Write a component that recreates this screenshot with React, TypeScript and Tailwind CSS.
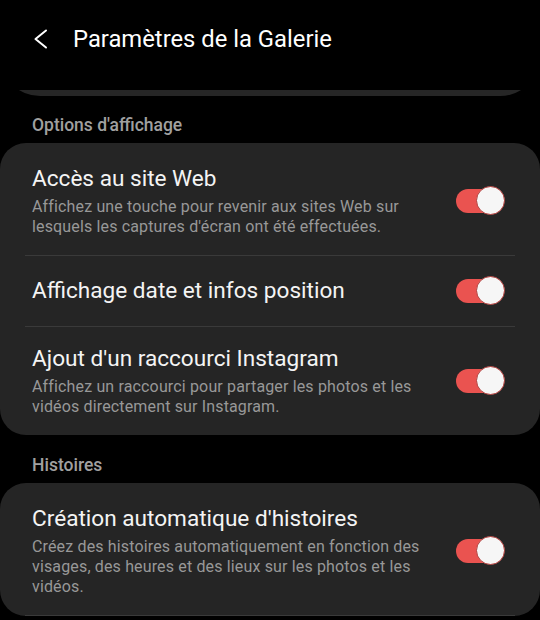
type Setting = {
  title: string;
  description?: string;
  on: boolean;
};

const display: Setting[] = [
  {
    title: 'Accès au site Web',
    description: "Affichez une touche pour revenir aux sites Web sur lesquels les captures d'écran ont été effectuées.",
    on: true,
  },
  { title: 'Affichage date et infos position', on: true },
  {
    title: "Ajout d'un raccourci Instagram",
    description: 'Affichez un raccourci pour partager les photos et les vidéos directement sur Instagram.',
    on: true,
  },
];

const stories: Setting[] = [
  {
    title: "Création automatique d'histoires",
    description: 'Créez des histoires automatiquement en fonction des visages, des heures et des lieux sur les photos et les vidéos.',
    on: true,
  },
];

function BackIcon() {
  return (
    <svg width="16" height="22" viewBox="0 0 16 22" fill="none" className="shrink-0">
      <polyline
        points="13,2.5 2.5,11 13,19.5"
        stroke="white"
        strokeWidth="2"
        strokeLinecap="round"
        strokeLinejoin="round"
      />
    </svg>
  );
}

function Toggle({ on }: { on: boolean }) {
  return (
    <div className="relative flex h-[30px] w-[50px] shrink-0 items-center">
      <div className={`h-[24px] w-[48px] rounded-full ${on ? 'bg-[#ea5350]' : 'bg-[#555]'}`} />
      <div
        className={`absolute top-0 h-[29px] w-[29px] rounded-full border border-[#b33d3a] bg-[#f6f6f6] ${
          on ? 'left-[20px]' : 'left-0'
        }`}
      />
    </div>
  );
}

function SettingRow({ item, last }: { item: Setting; last: boolean }) {
  return (
    <div
      className={`flex items-center gap-4 pl-[7px] pr-[9px] ${item.description ? 'py-[18px]' : 'py-5'} ${
        last ? '' : 'border-b border-[#3a3a3a]'
      }`}
    >
      <div className="min-w-0 flex-1 pr-[8px]">
        <p className="text-[22.6px] leading-[28px] text-[#f4f4f4]">{item.title}</p>
        {item.description && (
          <p className="mt-1 text-[16px] leading-[20px] tracking-[0.15px] text-[#989898]">{item.description}</p>
        )}
      </div>
      <Toggle on={item.on} />
    </div>
  );
}

function Section({ label, items, cut }: { label: string; items: Setting[]; cut?: boolean }) {
  return (
    <section>
      <h2 className="px-8 text-[17.5px] font-medium leading-[24px] text-[#a0a0a0]">{label}</h2>
      <div className="mt-[6px] rounded-[26px] bg-[#252525] px-[25px] pt-1">
        {items.map((item, i) => (
          <SettingRow key={item.title} item={item} last={!cut && i === items.length - 1} />
        ))}
      </div>
    </section>
  );
}

export default function App() {
  return (
    <div
      className="h-[620px] w-[540px] overflow-hidden bg-black"
      style={{ fontFamily: 'Roboto, "Noto Sans", sans-serif' }}
    >
      <header className="flex h-[78px] items-center gap-[24px] pl-[33px]">
        <BackIcon />
        <h1 className="text-[23.8px] leading-[30px] text-white">Paramètres de la Galerie</h1>
      </header>

      <div className="mt-[12px] h-[6px] overflow-hidden">
        <div className="-mt-[74px] h-[80px] rounded-[40px] bg-[#262626]" />
      </div>

      <div className="mt-[17px] flex flex-col gap-[18px]">
        <Section label="Options d'affichage" items={display} />
        <Section label="Histoires" items={stories} cut />
      </div>
    </div>
  );
}
